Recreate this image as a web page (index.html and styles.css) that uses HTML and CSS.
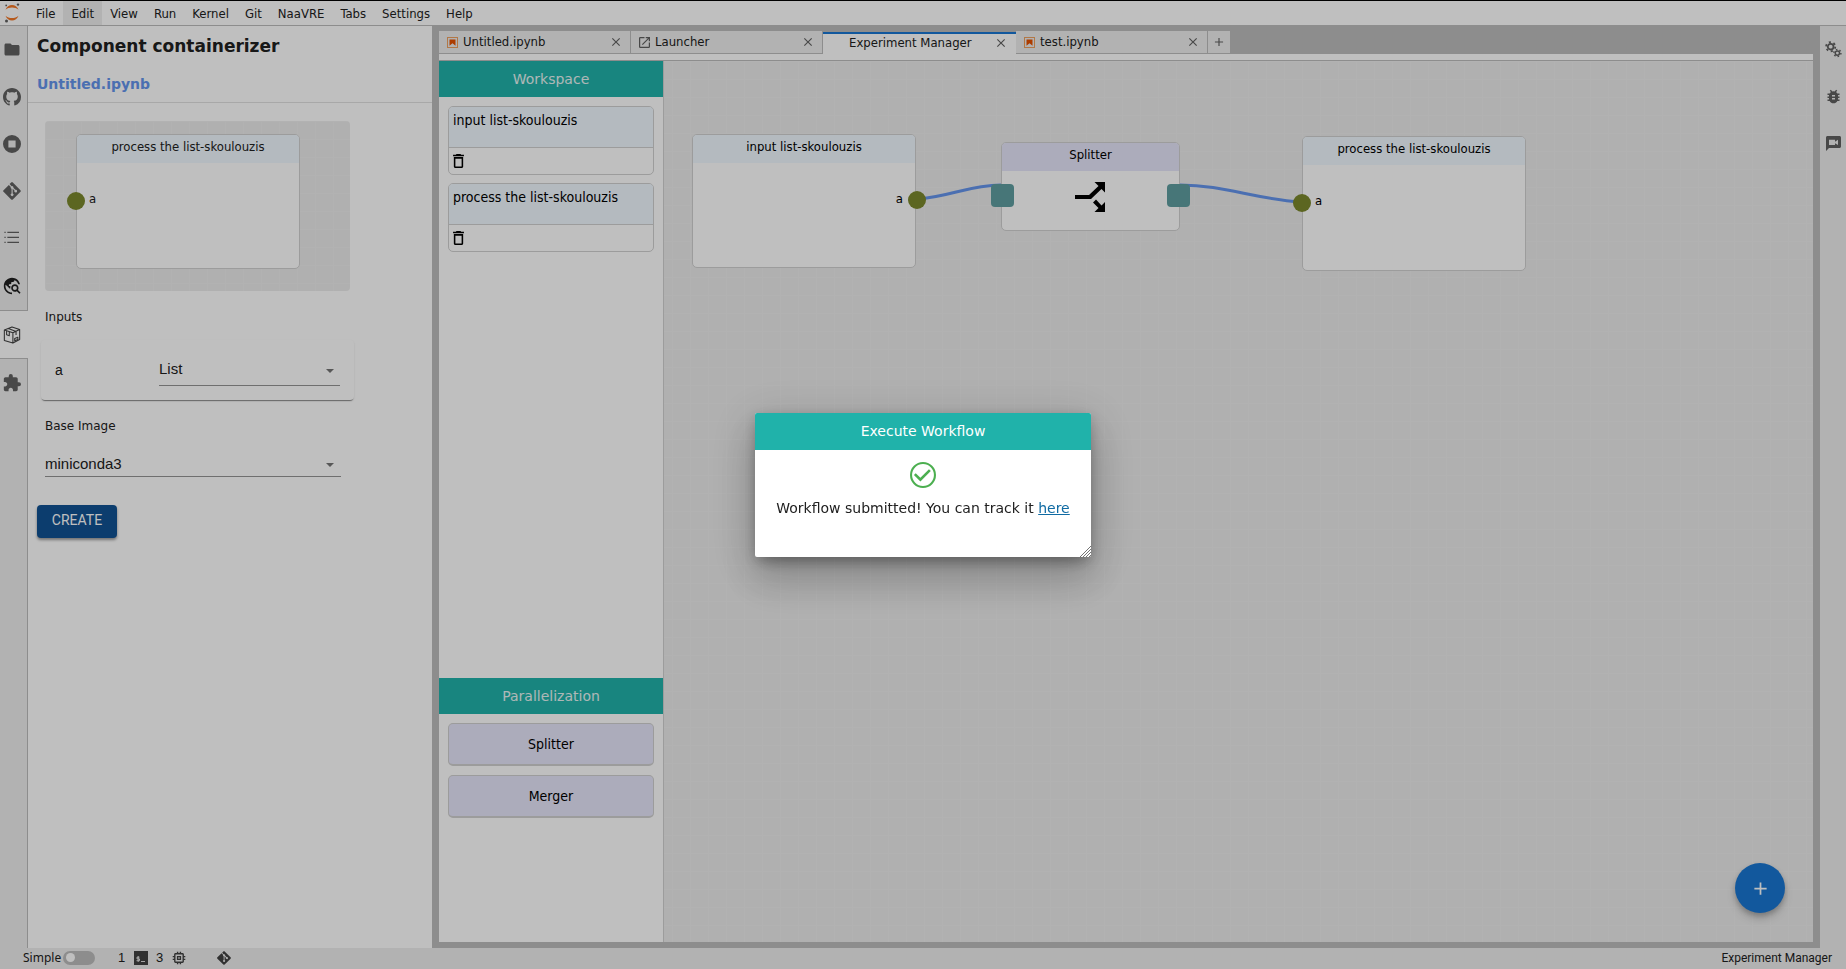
FILE: index.html
```html
<!DOCTYPE html>
<html lang="en">
<head>
<meta charset="utf-8">
<title>Experiment Manager</title>
<link rel="stylesheet" href="styles.css">
</head>
<body>
<svg class="defs" aria-hidden="true">
  <symbol id="i-close" viewBox="0 0 24 24"><path d="M19 6.41 17.59 5 12 10.59 6.41 5 5 6.41 10.59 12 5 17.59 6.41 19 12 13.41 17.59 19 19 17.59 13.41 12z"/></symbol>
  <symbol id="i-add" viewBox="0 0 24 24"><path d="M19 13h-6v6h-2v-6H5v-2h6V5h2v6h6v2z"/></symbol>
  <symbol id="i-notebook" viewBox="0 0 22 22"><path fill="#ef6c00" opacity=".6" d="M0 0h22v22H0zM2 2v18h18V2z" fill-rule="evenodd"/><path fill="#e65100" d="M5 5h12v12.500l-6-5-6 5z"/></symbol>
  <symbol id="i-git" viewBox="0 0 24 24"><path d="M23.300 10.900 13.100.7a1.500 1.500 0 0 0-2.200 0L8.800 2.800l2.700 2.700a1.800 1.800 0 0 1 2.300 2.300l2.600 2.600a1.800 1.800 0 1 1-1.100 1L12.900 9v6.300a1.800 1.800 0 1 1-1.500 0V8.900a1.800 1.800 0 0 1-1-2.400L7.800 3.900.7 10.900a1.500 1.500 0 0 0 0 2.200l10.200 10.200c.6.600 1.600.6 2.200 0l10.200-10.200c.6-.6.6-1.600 0-2.200z"/></symbol>
  <symbol id="i-trash" viewBox="5 3 14 18"><path d="M6 19c0 1.100.9 2 2 2h8c1.100 0 2-.9 2-2V7H6v12zM8 9h8v10H8V9zm7.500-5-1-1h-5l-1 1H5v2h14V4z"/></symbol>
</svg>

<div class="app">
  <header class="menubar">
    <svg class="logo" viewBox="0 0 16 20"><g fill="#f37726"><path d="M1.500 6.800C2.600 3.800 5.200 2 8 2s5.400 1.800 6.500 4.800C12.800 5.300 10.500 4.500 8 4.500s-4.800.8-6.500 2.300z"/><path d="M1.500 12.800c1.100 3 3.700 4.800 6.500 4.800s5.400-1.800 6.500-4.800c-1.700 1.500-4 2.300-6.500 2.300s-4.800-.8-6.500-2.300z"/></g><g fill="#616161"><circle cx="2.200" cy="2.400" r=".9"/><circle cx="14" cy="1.600" r="1.200"/><circle cx="2.500" cy="18" r="1.500"/></g></svg>
    <nav class="menus">
      <button class="menu">File</button><button class="menu menu-on">Edit</button><button class="menu">View</button><button class="menu">Run</button><button class="menu">Kernel</button><button class="menu">Git</button><button class="menu">NaaVRE</button><button class="menu">Tabs</button><button class="menu">Settings</button><button class="menu">Help</button>
    </nav>
  </header>

  <div class="body">
    <nav class="rail rail-left">
      <button class="rail-tab" aria-label="Files"><svg viewBox="0 0 24 24"><path d="M10 4H4c-1.100 0-2 .9-2 2v12c0 1.100.9 2 2 2h16c1.100 0 2-.9 2-2V8c0-1.100-.9-2-2-2h-8l-2-2z"/></svg></button>
      <button class="rail-tab" aria-label="GitHub"><svg viewBox="0 0 16 16"><path d="M8 0C3.580 0 0 3.580 0 8c0 3.540 2.290 6.530 5.470 7.590.4.070.55-.17.55-.38 0-.19-.01-.82-.01-1.490-2.010.37-2.530-.49-2.690-.94-.09-.23-.48-.94-.82-1.130-.28-.15-.68-.52-.01-.53.63-.01 1.080.58 1.230.82.72 1.210 1.870.87 2.330.66.07-.52.28-.87.51-1.070-1.780-.2-3.640-.89-3.640-3.950 0-.87.31-1.590.82-2.150-.08-.2-.36-1.020.08-2.120 0 0 .67-.21 2.200.82.64-.18 1.320-.27 2-.27s1.360.09 2 .27c1.530-1.040 2.200-.82 2.200-.82.44 1.100.16 1.920.08 2.120.51.56.82 1.270.82 2.150 0 3.070-1.870 3.750-3.650 3.950.29.25.54.73.54 1.480 0 1.070-.01 1.930-.01 2.200 0 .21.15.46.55.38A8.010 8.010 0 0 0 16 8c0-4.420-3.580-8-8-8z"/></svg></button>
      <button class="rail-tab" aria-label="Running"><svg viewBox="2 2 20 20"><path fill-rule="evenodd" d="M12 2a10 10 0 1 0 0 20 10 10 0 0 0 0-20zM8 8h8v8H8z"/></svg></button>
      <button class="rail-tab" aria-label="Git"><svg><use href="#i-git"/></svg></button>
      <button class="rail-tab" aria-label="Contents"><svg class="rail-list" viewBox="3 3 18 18"><path d="M7 5h14v1.500H7zm0 6h14v1.500H7zm0 6h14v1.500H7zM3.500 5H5v1.500H3.500zm0 6H5v1.500H3.500zm0 6H5v1.500H3.500z"/></svg></button>
      <button class="rail-tab rail-dark" aria-label="Search"><svg viewBox="1 1 22 22"><path d="M19.300 16.900c.4-.7.7-1.500.7-2.400 0-2.500-2-4.500-4.500-4.500S11 12 11 14.500s2 4.500 4.500 4.500c.9 0 1.700-.3 2.400-.7l3.200 3.200 1.400-1.400-3.200-3.200zM15.500 17a2.500 2.500 0 0 1 0-5 2.500 2.500 0 0 1 0 5zM12 20v2C6.480 22 2 17.520 2 12S6.480 2 12 2c4.840 0 8.870 3.440 9.800 8h-2.070A8 8 0 0 0 15 4.590V5c0 1.100-.9 2-2 2h-2v2c0 .55-.45 1-1 1H8v2h2v3H9l-4.790-4.790C4.080 10.790 4 11.380 4 12c0 4.410 3.590 8 8 8z"/><path d="M3 10 5 6l5-3 5 1-2 3h-2v2l-3 1v2H7z"/></svg></button>
      <button class="rail-tab rail-on" aria-label="Component containerizer"><svg viewBox="0 0 20 20"><g fill="none" stroke="#424242" stroke-width="1.200" stroke-linejoin="round"><path d="m10 1 8.500 3v11L11 19l-9.500-3V4.500zM1.500 4.500 11 7.500l7.500-3.500M11 7.500V19M6 2.800l8.500 3.200v4M4 5.300v4.500l3 1V6.200"/><path d="m13 14 3.500-1.500v2.500L13 16.500z"/></g></svg></button>
      <button class="rail-tab" aria-label="Extensions"><svg viewBox="1 1 22 22"><path d="M20.500 11H19V7c0-1.100-.9-2-2-2h-4V3.500a2.500 2.500 0 0 0-5 0V5H4c-1.100 0-2 .9-2 2v3.800h1.500c1.500 0 2.700 1.200 2.700 2.700S5 16.200 3.500 16.200H2V20c0 1.100.9 2 2 2h3.800v-1.500c0-1.500 1.200-2.700 2.700-2.700s2.700 1.200 2.700 2.700V22H17c1.100 0 2-.9 2-2v-4h1.500a2.500 2.500 0 0 0 0-5z"/></svg></button>
    </nav>

    <aside class="panel">
      <div class="panel-head">
        <h1 class="panel-title">Component containerizer</h1>
        <p class="panel-file">Untitled.ipynb</p>
      </div>
      <div class="panel-body">
        <div class="preview">
          <div class="node preview-node">
            <div class="node-title">process the list-skoulouzis</div>
            <span class="port port-left"></span><span class="port-name name-left">a</span>
          </div>
        </div>
        <h2 class="label">Inputs</h2>
        <div class="input-card">
          <label class="input-name" for="type-a">a</label>
          <div class="field"><select id="type-a" class="select"><option>List</option></select></div>
        </div>
        <label class="label" for="base-image">Base Image</label>
        <div class="field field-image"><select id="base-image" class="select"><option>miniconda3</option></select></div>
        <button class="create">CREATE</button>
      </div>
    </aside>

    <main class="dock">
      <div class="tabs">
        <div class="tab"><svg class="tab-icon"><use href="#i-notebook"/></svg><span class="tab-text">Untitled.ipynb</span><button class="tab-close" aria-label="Close"><svg><use href="#i-close"/></svg></button></div>
        <div class="tab"><svg class="tab-icon" viewBox="3 3 18 18"><path d="M19 19H5V5h7V3H5a2 2 0 0 0-2 2v14a2 2 0 0 0 2 2h14c1.100 0 2-.9 2-2v-7h-2v7zM14 3v2h3.590l-9.830 9.830 1.410 1.410L19 6.410V10h2V3h-7z"/></svg><span class="tab-text">Launcher</span><button class="tab-close" aria-label="Close"><svg><use href="#i-close"/></svg></button></div>
        <div class="tab tab-on"><span class="tab-icon"></span><span class="tab-text">Experiment Manager</span><button class="tab-close" aria-label="Close"><svg><use href="#i-close"/></svg></button></div>
        <div class="tab"><svg class="tab-icon"><use href="#i-notebook"/></svg><span class="tab-text">test.ipynb</span><button class="tab-close" aria-label="Close"><svg><use href="#i-close"/></svg></button></div>
        <button class="tab-add" aria-label="New tab"><svg><use href="#i-add"/></svg></button>
      </div>
      <div class="strip"></div>
      <div class="manager">
        <section class="tray">
          <div class="tray-part">
            <h2 class="tray-title">Workspace</h2>
            <div class="tray-list tray-cells">
              <div class="cell"><div class="cell-name">input list-skoulouzis</div><div class="cell-foot"><button class="trash" aria-label="Delete"><svg><use href="#i-trash"/></svg></button></div></div>
              <div class="cell"><div class="cell-name">process the list-skoulouzis</div><div class="cell-foot"><button class="trash" aria-label="Delete"><svg><use href="#i-trash"/></svg></button></div></div>
            </div>
          </div>
          <div class="tray-part">
            <h2 class="tray-title">Parallelization</h2>
            <div class="tray-list">
              <button class="op">Splitter</button>
              <button class="op">Merger</button>
            </div>
          </div>
        </section>
        <section class="canvas">
          <svg class="links" viewBox="0 0 900 300"><g fill="none" stroke="#6495ed" stroke-width="3"><path d="M253 138C285 136 305 124 337 124"/><path d="M516 124C560 124 590 138 637 141"/></g></svg>
          <div class="node node-input"><div class="node-title">input list-skoulouzis</div><span class="port port-right"></span><span class="port-name name-right">a</span></div>
          <div class="node node-splitter"><div class="node-title node-title-op">Splitter</div>
            <span class="gate gate-left"></span><span class="gate gate-right"></span>
            <svg class="split-icon" viewBox="0 0 30 30"><path d="M0 13h14L23.500 4 19.500 0H30v10.500L26.500 7 16 17H0zM21 17.500l5.500 6L30 20v10H19.500l4-4-5.500-5.500z"/></svg>
          </div>
          <div class="node node-process"><div class="node-title">process the list-skoulouzis</div><span class="port port-left"></span><span class="port-name name-left">a</span></div>
          <button class="fab" aria-label="Add"><svg><use href="#i-add"/></svg></button>
        </section>
      </div>
    </main>

    <nav class="rail rail-right">
      <button class="rail-tab" aria-label="Property inspector"><svg viewBox="0 0 24 24"><g fill="none" stroke="#616161"><circle cx="8" cy="8" r="4" stroke-width="2.500"/><circle cx="8" cy="8" r="6.500" stroke-width="2.500" stroke-dasharray="3 3.800"/><circle cx="17.500" cy="17" r="3" stroke-width="2"/><circle cx="17.500" cy="17" r="5" stroke-width="2" stroke-dasharray="2.200 3"/></g></svg></button>
      <button class="rail-tab" aria-label="Debugger"><svg viewBox="2 2 20 20"><path fill-rule="evenodd" d="M20 8h-2.810a5.990 5.990 0 0 0-1.820-1.960L17 4.410 15.590 3l-2.170 2.170a6 6 0 0 0-2.830 0L8.410 3 7 4.410l1.620 1.630C7.880 6.550 7.260 7.220 6.810 8H4v2h2.090c-.05.33-.09.66-.09 1v1H4v2h2v1c0 .34.040.67.090 1H4v2h2.810a6 6 0 0 0 10.380 0H20v-2h-2.090c.05-.33.09-.66.09-1v-1h2v-2h-2v-1c0-.34-.04-.67-.09-1H20V8zm-6 8h-4v-2h4v2zm0-4h-4v-2h4v2z"/></svg></button>
      <button class="rail-tab" aria-label="Chat"><svg viewBox="2 2 20 20"><path fill-rule="evenodd" d="M20 2H4c-1.100 0-2 .9-2 2v18l4-4h14c1.100 0 2-.9 2-2V4c0-1.100-.9-2-2-2zM6 7h8v2.500l4-2.500v7l-4-2.500V14H6z"/></svg></button>
    </nav>
  </div>

  <footer class="status">
    <label class="simple" for="simple-mode">Simple</label>
    <input class="toggle" type="checkbox" id="simple-mode">
    <span class="count count-first">1</span>
    <svg class="status-icon" viewBox="0 0 14 14"><path fill="#424242" d="M0 0h14v14H0z"/><path fill="none" stroke="#eee" stroke-width=".9" d="M5.500 6.200H3v1.700h2.500v1.800H2.500M4.200 5v6M7 10.500h4"/></svg>
    <span class="count">3</span>
    <svg class="status-icon" viewBox="2 2 20 20"><path fill-rule="evenodd" d="M15 9H9v6h6V9zm-2 4h-2v-2h2v2zm8-2V9h-2V7c0-1.100-.9-2-2-2h-2V3h-2v2h-2V3H9v2H7c-1.100 0-2 .9-2 2v2H3v2h2v2H3v2h2v2c0 1.100.9 2 2 2h2v2h2v-2h2v2h2v-2h2c1.100 0 2-.9 2-2v-2h2v-2h-2v-2h2zm-4 6H7V7h10v10z"/></svg>
    <svg class="status-icon status-git"><use href="#i-git"/></svg>
    <span class="status-right">Experiment Manager</span>
  </footer>
</div>

<div class="backdrop">
  <div class="dialog" role="dialog" aria-labelledby="dialog-title">
    <h2 class="dialog-title" id="dialog-title">Execute Workflow</h2>
    <div class="dialog-body">
      <svg class="ok" viewBox="2 2 20 20"><path d="M16.590 7.580 10 14.170l-3.590-3.580L5 12l5 5 8-8-1.410-1.420zM12 2a10 10 0 1 0 0 20 10 10 0 0 0 0-20zm0 18.400a8.400 8.400 0 1 1 0-16.800 8.400 8.400 0 0 1 0 16.800z"/></svg>
      <p class="dialog-text">Workflow submitted! You can track it <a class="link" href="#">here</a></p>
    </div>
    <svg class="grip" viewBox="0 0 11 11"><path d="M0 11 11 0M3 11l8-8M6 11l5-5M9 11l2-2" stroke="#757575" fill="none"/></svg>
  </div>
</div>
</body>
</html>
```
FILE: styles.css
```css
* { box-sizing: border-box; }
body { margin: 0; font-family: "DejaVu Sans Condensed", "DejaVu Sans", sans-serif; font-size: 13px; color: #212121; background: #fff; }
h1, h2, p { margin: 0; font-weight: 400; }
button { margin: 0; padding: 0; border: 0; background: none; font: inherit; color: inherit; }
svg { display: block; flex: none; }
.defs { position: absolute; width: 0; height: 0; }
.app { display: flex; flex-direction: column; height: 100vh; background: #eee; }

.menubar { display: flex; align-items: stretch; height: 26px; background: #fff; border-top: 1px solid #000; border-bottom: 1px solid #bdbdbd; }
.logo { width: 16px; height: 20px; margin: 2px 7px 0 4px; }
.menus { display: flex; padding-left: 1px; }
.menu { padding: 0 8px; }
.menu-on { background: #eee; }

.body { display: flex; flex: 1; min-height: 0; }
.rail { display: flex; flex-direction: column; background: #eee; fill: #616161; }
.rail-left { width: 28px; border-right: 1px solid #bdbdbd; }
.rail-right { width: 26px; }
.rail-tab { display: flex; align-items: center; justify-content: center; height: 47px; }
.rail-tab svg { width: 18px; height: 18px; }
.rail-left .rail-tab { padding-right: 4px; }
.rail-tab .rail-list { width: 15px; height: 15px; }
.rail-left .rail-tab:first-child svg { height: 19px; }
.rail-right .rail-tab svg { width: 15px; height: 15px; }
.rail-right .rail-tab:first-child svg { width: 17px; height: 17px; }
.rail-left .rail-dark { height: 49px; fill: #212121; }
.rail-left .rail-on { height: 49px; margin-right: -1px; padding-right: 5px; background: #fff; border-top: 1px solid #bdbdbd; border-bottom: 1px solid #bdbdbd; }

.panel { width: 404px; background: #fff; }
.panel-head { display: flex; flex-direction: column; gap: 14px; height: 77px; padding: 8px 9px 0; border-bottom: 1px solid #e0e0e0; }
.panel-title { font: 700 17px/24px "DejaVu Sans", sans-serif; }
.panel-file { font: 700 14px/24px "DejaVu Sans", sans-serif; color: #6495ed; }
.panel-body { display: flex; flex-direction: column; align-items: flex-start; padding: 18px 9px; }
.preview { position: relative; width: 305px; height: 170px; margin-left: 8px; border-radius: 4px; background: #ebebeb; background-image: linear-gradient(#eee 1px, transparent 1px), linear-gradient(90deg, #eee 1px, transparent 1px); background-size: 18px 18px; }
.label { margin: 16px 0 0 8px; font: 12px/20px "DejaVu Sans", sans-serif; }
.input-card { display: flex; align-items: center; width: 313px; height: 60px; margin: 13px 0 0 4px; padding: 0 14px; border-radius: 4px; box-shadow: 0 2px 1px -1px rgba(0,0,0,.4), 0 1px 2px rgba(0,0,0,.12); }
.input-name { flex: 1; font: 14px "Liberation Sans", sans-serif; }
.field { position: relative; width: 181px; border-bottom: 1px solid #949494; }
.field::after { content: ""; position: absolute; right: 6px; top: 14px; border: 4px solid transparent; border-top-color: #757575; border-bottom: 0; }
.select { display: block; width: 100%; height: 30px; padding: 0 0 2px; border: 0; appearance: none; background: none; color: #212121; font: 15px "Liberation Sans", sans-serif; }
.field-image { width: 296px; margin: 16px 0 0 8px; }
.field-image::after { right: 7px; top: 11px; }
.field-image .select { height: 24px; }
.create { width: 80px; height: 33px; margin-top: 28px; border-radius: 4px; background: #115293; color: #fff; font: 14px Roboto, sans-serif; padding-bottom: 4px; box-shadow: 0 2px 3px rgba(0,0,0,.4); }

.dock { display: flex; flex-direction: column; flex: 1; min-width: 0; padding: 5px 7px 6px; background: #bdbdbd; }
.tabs { display: flex; height: 23px; border-bottom: 1px solid #bdbdbd; }
.tab { display: flex; align-items: center; width: 192px; padding: 0 7px 0 8px; background: #eee; border-right: 1px solid #bdbdbd; }
.tab-icon { width: 11px; height: 11px; margin-right: 5px; fill: #616161; }
.tab-text { flex: 1; padding-bottom: 2px; }
.tab-close svg { width: 14px; height: 14px; fill: #616161; }
.tab-on { width: 193px; height: 23px; margin-top: 1px; padding: 0 8px 4px 10px; background: #fff; border-top: 2px solid #1976d2; border-right: 0; }
.tab-on .tab-text { padding-bottom: 0; }
.tab-add { width: 22px; background: #eee; }
.tab-add svg { width: 14px; height: 14px; margin: 0 auto; fill: #616161; }
.strip { height: 7px; background: #fff; border-bottom: 1px solid #bdbdbd; }
.manager { display: flex; flex: 1; min-height: 0; }
.tray { display: flex; flex-direction: column; width: 225px; background: #fff; border-right: 1px solid #d0d0d0; }
.tray-part:first-child { flex: 70; }
.tray-part { flex: 30; flex-basis: 0; }
.tray-title { height: 36px; background: #20b2aa; color: #e8f5f4; font: 14px/36px "DejaVu Sans", sans-serif; text-align: center; }
.tray-list { display: flex; flex-direction: column; gap: 9px; padding: 9px; font-size: 14px; }
.tray-cells { gap: 8px; }
.cell { height: 69px; border: 1px solid #d0d0d0; border-radius: 5px; color: #000; overflow: hidden; }
.cell-name { height: 41px; padding: 5px 4px; line-height: 16px; background: #f0f8ff; border-bottom: 1px solid #d0d0d0; }
.cell-foot { padding: 6px 4px; }
.trash svg { width: 11px; height: 14px; }
.op { height: 43px; border: 1px solid #d0d0d0; border-bottom-width: 2px; border-radius: 5px; background: #e6e6fa; color: #000; }

.canvas { position: relative; flex: 1; background-color: #ebebeb; background-image: linear-gradient(#eee 1px, transparent 1px), linear-gradient(90deg, #eee 1px, transparent 1px); background-size: 18px 18px; background-position: 8px 0; }
.links { position: absolute; left: 0; top: 0; width: 900px; height: 300px; }
.node { position: absolute; width: 224px; height: 135px; border: 1px solid #d0d0d0; border-radius: 5px; background: #fff; }
.node-title { height: 28px; padding-top: 4px; line-height: 16px; text-align: center; border-radius: 4px 4px 0 0; background: #f0f8ff; }
.node-title-op { background: #e6e6fa; }
.preview-node { left: 31px; top: 13px; }
.node-input { left: 28px; top: 73px; height: 134px; color: #000; }
.node-splitter { left: 337px; top: 81px; width: 179px; height: 89px; color: #000; }
.node-process { left: 638px; top: 75px; color: #000; }
.port { position: absolute; top: 57px; width: 18px; height: 18px; border-radius: 50%; background: #7b882c; }
.port-left { left: -10px; }
.port-right { right: -11px; top: 56px; }
.port-name { position: absolute; top: 56px; line-height: 16px; }
.name-left { left: 12px; }
.name-right { right: 12px; }
.gate { position: absolute; top: 41px; width: 23px; height: 23px; border-radius: 4px; background: #5f9ea0; }
.gate-left { left: -11px; }
.gate-right { right: -11px; }
.split-icon { position: absolute; left: 73px; top: 39px; width: 30px; height: 30px; }
.fab { position: absolute; right: 28px; bottom: 29px; display: flex; align-items: center; justify-content: center; width: 50px; height: 50px; border-radius: 50%; background: #1976d2; box-shadow: 0 3px 5px rgba(0,0,0,.2), 0 6px 10px rgba(0,0,0,.14); }
.fab svg { width: 21px; height: 21px; fill: #fff; }

.status { display: flex; align-items: center; height: 21px; padding: 0 14px 2px 23px; background: #eee; font-family: Roboto, sans-serif; font-size: 12px; }
.simple { width: 40px; font-family: "Noto Sans", sans-serif; }
.toggle { display: flex; align-items: center; width: 32px; height: 14px; margin: 0; padding: 0 3px; appearance: none; border-radius: 7px; background: #bdbdbd; }
.toggle::before { content: ""; width: 9px; height: 9px; border-radius: 50%; background: #fff; }
.count { width: 16px; margin-left: 8px; font: 13px "Liberation Sans", sans-serif; }
.count-first { margin-left: 23px; }
.status-icon { width: 14px; height: 14px; fill: #424242; }
.status-git { margin-left: 31px; }
.status-right { margin-left: auto; }

.backdrop { position: fixed; inset: 0; display: flex; align-items: center; justify-content: center; background: rgba(0,0,0,.25); }
.dialog { position: relative; width: 336px; border-radius: 2px; background: #fff; box-shadow: 0 11px 15px -7px rgba(0,0,0,.2), 0 24px 38px 3px rgba(0,0,0,.14), 0 9px 46px 8px rgba(0,0,0,.12), 0 4px 14px rgba(0,0,0,.2); }
.dialog-title { background: #20b2aa; color: #fff; font: 14px/37px "DejaVu Sans", sans-serif; text-align: center; border-radius: 2px 2px 0 0; }
.dialog-body { display: flex; flex-direction: column; align-items: center; gap: 10px; height: 107px; padding-top: 12px; }
.ok { width: 26px; height: 26px; fill: #4caf50; }
.dialog-text { font: 14px/20px "DejaVu Sans", sans-serif; }
.link { color: #106ba3; }
.grip { position: absolute; right: 0; bottom: 0; width: 11px; height: 11px; }
```
